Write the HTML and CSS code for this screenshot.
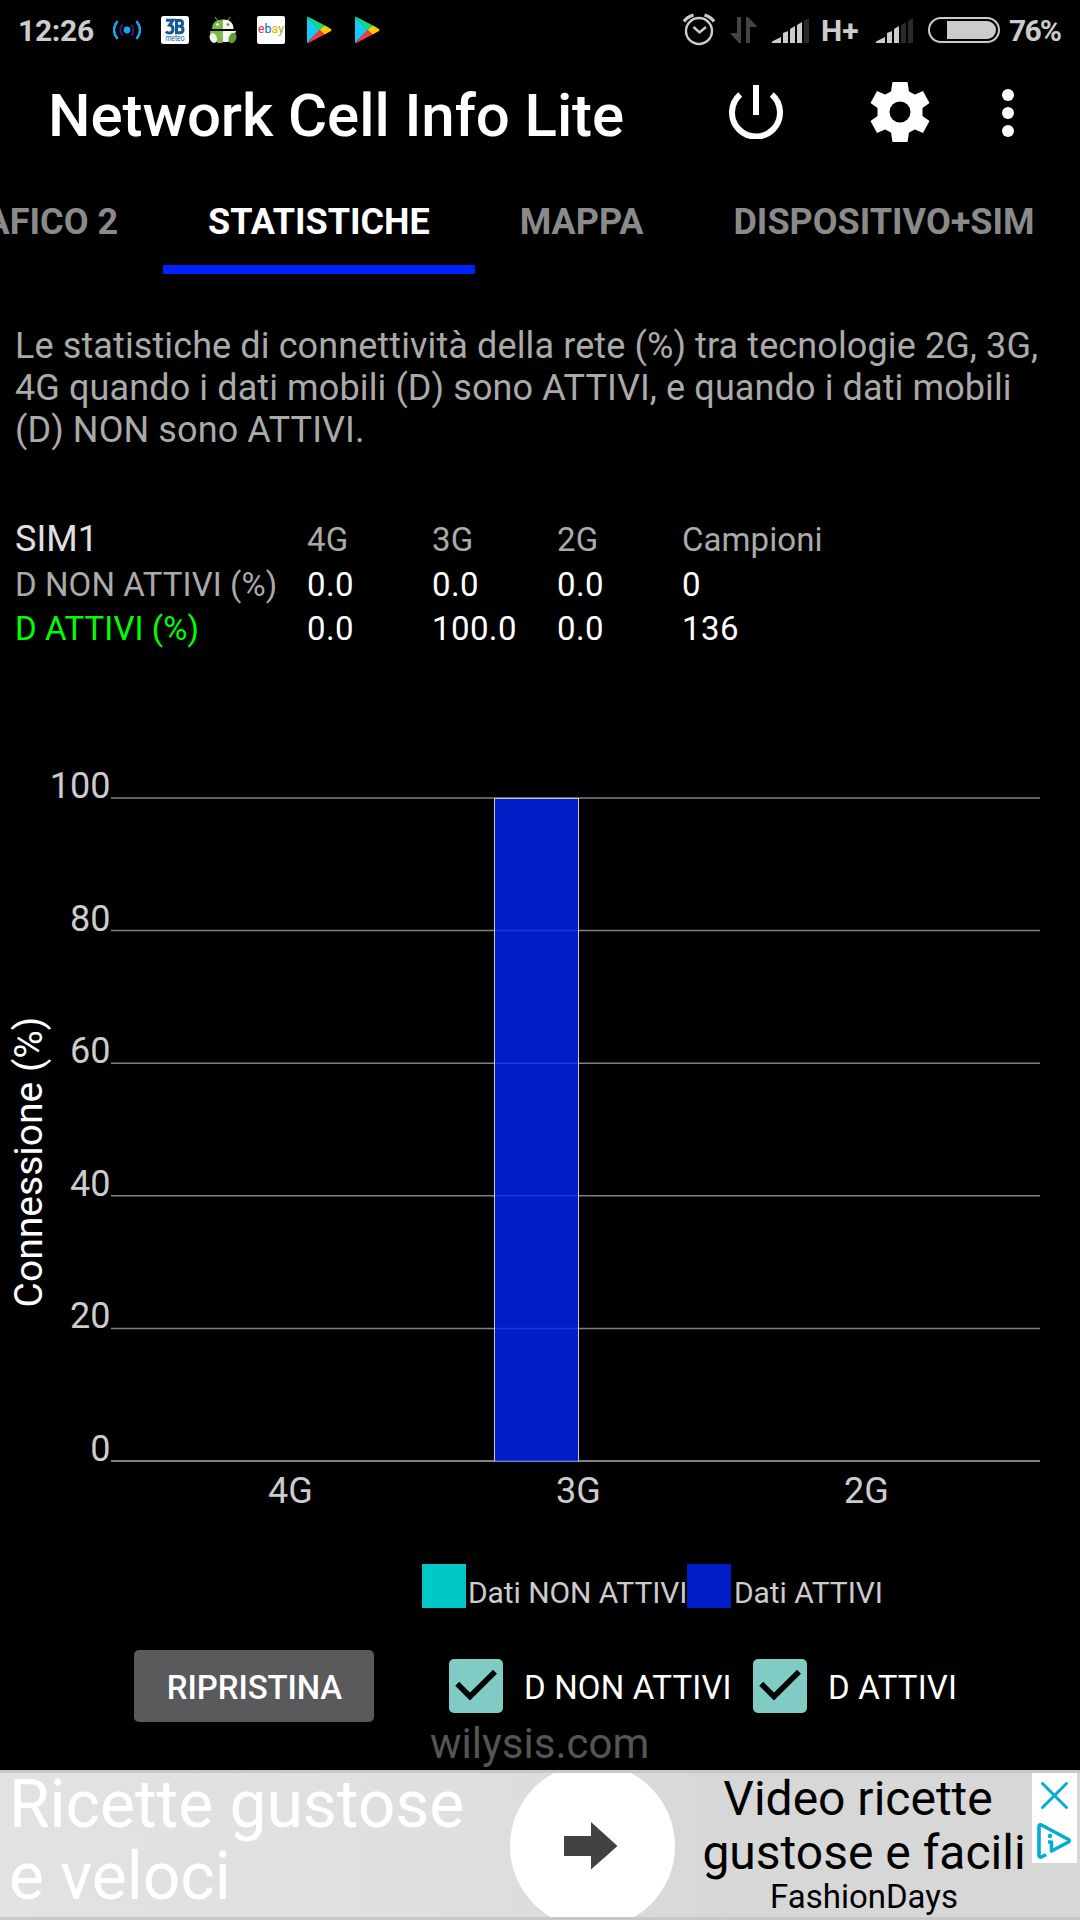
FILE: index.html
```html
<!DOCTYPE html>
<html lang="it">
<head>
<meta charset="utf-8">
<title>Network Cell Info Lite</title>
<link rel="stylesheet" href="styles.css">
</head>
<body>
<div class="screen">
  <div class="statusbar">
    <div class="status-left">
      <span class="clock">12:26</span>
      <svg class="notif" viewBox="0 0 28 28"><circle cx="14" cy="14" r="3.400" fill="#1ba6f5"/><path d="M9.700 8.500Q5.400 14 9.700 19.500M18.300 8.500Q22.600 14 18.300 19.500" fill="none" stroke="#2a1e6e" stroke-width="2.200"/><path d="M4.600 5Q-2.600 14 4.600 23M23.400 5Q30.600 14 23.400 23" fill="none" stroke="#1ba6f5" stroke-width="2.400"/></svg>
      <svg class="notif" viewBox="0 0 28 28"><rect width="28" height="28" rx="2.500" fill="#fff"/><g fill="none" stroke="#155a94" stroke-width="3"><path d="M5 4.300H12L8.500 9Q12 9.500 12 13Q12 17 8.500 17Q6 17 5 15.500"/><path d="M14 4.500H19Q21.500 4.500 21.500 7.200Q21.500 10 19 10.200H16M19 10.200Q22 10.500 22 13.500Q22 16.700 19 16.700H14M15.500 3V18"/></g><text class="meteo" x="14" y="25.300" text-anchor="middle" textLength="19" lengthAdjust="spacingAndGlyphs">meteo</text></svg>
      <svg class="notif" viewBox="0 0 28 28"><path d="M6 1L9 5.500M21 1L18 5.500" stroke="#7cb93f" stroke-width="1"/><path d="M3 13Q3 3.500 13.500 3.500V13Z" fill="#7cb93f"/><path d="M13.500 3.500Q24.500 3.500 24.500 13H13.500Z" fill="#f4f4f4"/><circle cx="8.500" cy="8.500" r="1.300" fill="#fff"/><circle cx="19" cy="8.500" r="1.300" fill="#5d8f2c"/><path d="M1 15H13.500V27H9Q5 24 1 17Z" fill="#7cb93f"/><path d="M13.500 15H27Q25 22 19 26H13.500Z" fill="#f4f4f4"/><ellipse cx="4.300" cy="22" rx="3.500" ry="5" transform="rotate(-20 4.300 22)" fill="#f4f4f4"/><ellipse cx="23.500" cy="22" rx="3.700" ry="5.500" transform="rotate(20 23.500 22)" fill="#639b35"/></svg>
      <svg class="notif" viewBox="0 0 28 28"><rect width="28" height="28" rx="2" fill="#fff"/><text class="ebay" x="1" y="17" textLength="26" lengthAdjust="spacingAndGlyphs"><tspan fill="#e53238">e</tspan><tspan fill="#0064d2">b</tspan><tspan fill="#f5af02">a</tspan><tspan fill="#86b817">y</tspan></text></svg>
      <svg class="notif" viewBox="0 0 28 28"><path d="M2 1L15 14L2 27Z" fill="#14c9f5"/><path d="M2 1Q3 .500 4 1.300L19.500 9.300L14.500 14Z" fill="#0be07a"/><path d="M19.500 9.300L26 13Q27 14 26 15L19.500 18.500L14.500 14Z" fill="#fc0"/><path d="M2 27L14.500 14L19.500 18.500L4 26.700Q3 27.500 2 27Z" fill="#f23a4a"/></svg>
      <svg class="notif" viewBox="0 0 28 28"><path d="M2 1L15 14L2 27Z" fill="#14c9f5"/><path d="M2 1Q3 .500 4 1.300L19.500 9.300L14.500 14Z" fill="#0be07a"/><path d="M19.500 9.300L26 13Q27 14 26 15L19.500 18.500L14.500 14Z" fill="#fc0"/><path d="M2 27L14.500 14L19.500 18.500L4 26.700Q3 27.500 2 27Z" fill="#f23a4a"/></svg>
    </div>
    <svg class="status-right" viewBox="0 0 398 60">
      <g fill="none" stroke="#ccc"><circle cx="17" cy="31" r="13" stroke-width="2.400"/><path d="M11.500 27L17.500 32.500L24 27" stroke-width="2.400"/><path d="M2 21.500Q5 17 11.500 15M32 21.500Q29 17 22.500 15" stroke-width="3.200"/></g>
      <path d="M48 33H55V17H59V43H57ZM64 17H66L75.500 27H68V43H64Z" fill="#444"/>
      <path d="M90 43V41.500L99 37V43ZM101 33L106 31V43H101ZM108 29L113 26V43H108ZM115 25L120 22V43H115Z" fill="#ccc"/>
      <path d="M122 21L127 18V43H122Z" fill="#2a2a2a"/>
      <text class="status-text" x="139" y="41">H+</text>
      <path d="M194 43V41.500L203 37V43ZM205 33L210 31V43H205ZM212 29L217 26V43H212Z" fill="#ccc"/>
      <path d="M219 25L224 22V43H219ZM226 21L231 18V43H226Z" fill="#2a2a2a"/>
      <rect x="247" y="18" width="70" height="24" rx="12" fill="none" stroke="#ccc" stroke-width="2"/>
      <path d="M265 21H305A9 9 0 0 1 305 39H265Z" fill="#ccc"/>
      <text class="status-text" x="327" y="41" textLength="53">76%</text>
    </svg>
  </div>

  <header class="appbar">
    <h1 class="title">Network Cell Info Lite</h1>
    <svg class="power" viewBox="0 0 54 54"><path d="M11.200 9.500A24 24 0 1 0 42.800 9.500" fill="none" stroke="#fff" stroke-width="6" /><path d="M27 0V30" stroke="#fff" stroke-width="6"/></svg>
    <svg class="gear" viewBox="0 0 60 60"><path fill="#fff" fill-rule="evenodd" d="M22.500 0H37.500L39 9.500L45 12.500L53 9L59.500 21L52.500 26V34L59.500 39L53 51L45 47.500L39 50.500L37.500 60H22.500L21 50.500L15 47.500L7 51L.500 39L7.500 34V26L.500 21L7 9L15 12.500L21 9.500ZM30 19.500A10.500 10.500 0 1 0 30 40.500A10.500 10.500 0 1 0 30 19.500Z"/></svg>
    <svg class="more" viewBox="0 0 12 48"><g fill="#fff"><circle cx="6" cy="6" r="6"/><circle cx="6" cy="24" r="6"/><circle cx="6" cy="42" r="6"/></g></svg>
  </header>

  <nav class="tabs">
    <span class="tab">GRAFICO 2</span>
    <span class="tab active">STATISTICHE</span>
    <span class="tab">MAPPA</span>
    <span class="tab">DISPOSITIVO+SIM</span>
  </nav>

  <p class="intro">Le statistiche di connettività della rete (%) tra tecnologie 2G, 3G,<br>4G quando i dati mobili (D) sono ATTIVI, e quando i dati mobili<br>(D) NON sono ATTIVI.</p>

  <div class="stats">
    <span class="sim">SIM1</span><span>4G</span><span>3G</span><span>2G</span><span>Campioni</span>
    <span>D NON ATTIVI (%)</span><b>0.0</b><b>0.0</b><b>0.0</b><b>0</b>
    <span class="on">D ATTIVI (%)</span><b>0.0</b><b>100.0</b><b>0.0</b><b>136</b>
  </div>

  <svg class="chart" viewBox="0 0 1080 760">
    <g stroke="#808080" stroke-width="1.500">
      <path d="M111 38H1040M111 170.600H1040M111 303.200H1040M111 435.800H1040M111 568.400H1040"/>
      <path d="M111 701H1040" stroke-width="2"/>
    </g>
    <rect x="494.500" y="38.500" width="84" height="662.500" fill="#001ec8" stroke="#ccc"/>
    <path d="M495 170.600H578M495 303.200H578M495 435.800H578M495 568.400H578M495 700.500H578" stroke="#1b36dc" stroke-width="1.500"/>
    <g class="axis" text-anchor="end">
      <text x="110.500" y="38">100</text>
      <text x="110.500" y="171">80</text>
      <text x="110.500" y="303">60</text>
      <text x="110.500" y="436">40</text>
      <text x="110.500" y="568">20</text>
      <text x="110.500" y="701">0</text>
    </g>
    <g class="axis" text-anchor="middle">
      <text x="290.500" y="743">4G</text>
      <text x="578.500" y="743">3G</text>
      <text x="866.500" y="743">2G</text>
    </g>
    <text class="ylabel" transform="translate(42 402) rotate(-90)" text-anchor="middle">Connessione (%)</text>
  </svg>

  <div class="legend">
    <i class="swatch off"></i><span class="legend-off">Dati NON ATTIVI</span>
    <i class="swatch"></i><span>Dati ATTIVI</span>
  </div>

  <div class="controls">
    <button class="reset">RIPRISTINA</button>
    <label class="check first"><svg class="box" viewBox="0 0 54 54"><rect width="54" height="54" rx="5" fill="#80cbc4"/><path d="M8.200 24.700L21 37.500L46 12.700" fill="none" stroke="#000" stroke-width="5.500"/></svg><span class="check-text">D NON ATTIVI</span></label>
    <label class="check second"><svg class="box" viewBox="0 0 54 54"><rect width="54" height="54" rx="5" fill="#80cbc4"/><path d="M8.200 24.700L21 37.500L46 12.700" fill="none" stroke="#000" stroke-width="5.500"/></svg><span class="check-text">D ATTIVI</span></label>
  </div>
  <div class="brand">wilysis.com</div>

  <div class="ad">
    <div class="ad-head">Ricette gustose<br>e veloci</div>
    <svg class="ad-go" viewBox="0 0 166 144"><circle cx="82.500" cy="73" r="82.500" fill="#fff"/><path d="M54 63H81V49L107.500 73L81 96.500V83H54Z" fill="#424242"/></svg>
    <div class="ad-copy"><div class="ad-title">Video ricette&nbsp;<br>gustose e facili</div><div class="ad-brand">FashionDays</div></div>
    <svg class="ad-ctl" viewBox="0 0 45 90"><rect width="45" height="90" fill="#fff"/><g fill="none" stroke="#00aecd"><path d="M10.500 10.500L34.500 34.500M34.500 10.500L10.500 34.500" stroke-width="3" stroke-linecap="round"/><path d="M14 81.500L9.500 84Q7 84.500 7 82V54Q7 51 9.500 52L36.500 66.500Q38 67.500 36.500 69L19.500 78V69H16" stroke-width="3.600" stroke-linejoin="round"/></g><circle cx="18" cy="63" r="2.200" fill="#00aecd"/></svg>
  </div>
</div>
</body>
</html>
```
FILE: styles.css
```css
body { margin: 0; background: #000; font-family: Roboto, sans-serif; }
.screen { width: 1080px; height: 1920px; display: flex; flex-direction: column; overflow: hidden; background: #000; color: #fff; }
svg { display: block; flex: none; }

.statusbar { height: 60px; display: flex; justify-content: space-between; flex: none; }
.status-left { display: flex; align-items: center; gap: 20px; padding-left: 18px; }
.clock { width: 75px; font-size: 30px; font-weight: 700; letter-spacing: -0.3px; color: #ccc; white-space: nowrap; }
.notif { width: 28px; height: 28px; }
.status-right { width: 398px; height: 60px; }
.status-text { font-size: 30px; font-weight: 700; fill: #ccc; }
.meteo { font-size: 8.5px; fill: #155a94; }
.ebay { font-size: 13px; }

.appbar { height: 110px; display: flex; align-items: flex-start; flex: none; padding-left: 48px; }
.title { width: 681px; margin: 21px 0 0; font-size: 60px; line-height: 70px; font-weight: 500; letter-spacing: -0.08px; white-space: nowrap; }
.power { width: 54px; height: 54px; margin-top: 25px; }
.gear { width: 60px; height: 60px; margin: 22px 0 0 87px; }
.more { width: 12px; height: 48px; margin: 29px 0 0 72px; }

.tabs { height: 104px; display: flex; flex: none; margin-left: -107px; }
.tab { box-sizing: border-box; height: 104px; padding: 31px 45px 0; font-size: 36px; line-height: 42px; font-weight: 700; letter-spacing: 0; color: #8a8a8a; white-space: nowrap; flex: none; }
.active { color: #fff; border-bottom: 9px solid #0022ff; }

.intro { margin: 51px 0 0 15px; font-size: 36px; line-height: 42px; letter-spacing: 0.11px; color: #aaa; white-space: nowrap; }

.stats { margin: 67px 0 0 15px; display: grid; grid-template-columns: 292px 125px 125px 125px 1fr; grid-template-rows: 45px 44px 43px; align-items: baseline; font-size: 33px; line-height: 43px; letter-spacing: 0.08px; color: #aaa; white-space: nowrap; }
.stats b { font-weight: 400; letter-spacing: 0.4px; color: #fff; }
.sim { font-size: 36px; color: #e0e0e0; }
.stats .on { color: #0f0; }

.chart { width: 1080px; height: 760px; margin-top: 110px; }
.axis { font-size: 36px; fill: #ccc; }
.ylabel { font-size: 39px; fill: #fff; }

.legend { display: flex; margin: 44px 0 0 422px; height: 44px; font-size: 30px; line-height: 58px; letter-spacing: -0.08px; color: #ccc; white-space: nowrap; }
.swatch { width: 44px; height: 44px; margin-right: 3px; background: #001ec8; flex: none; }
.off { margin-right: 2px; background: #00c8c8; }
.legend-off { width: 219px; }

.controls { display: flex; align-items: center; height: 72px; margin-top: 42px; padding-left: 134px; flex: none; }
.reset { width: 240px; height: 72px; padding: 2px 0 0 1px; border: 0; border-radius: 5px; background: #5a595b; color: #fff; font: 500 33px Roboto, sans-serif; letter-spacing: -0.1px; }
.check { display: flex; align-items: center; gap: 21px; font-size: 33px; letter-spacing: 0.15px; white-space: nowrap; }
.check-text { padding-top: 2px; }
.box { width: 54px; height: 54px; }
.first { width: 304px; margin-left: 75px; }

.brand { height: 48px; margin-left: 430px; font-size: 42px; line-height: 44px; color: #555; flex: none; }

.ad { box-sizing: border-box; height: 150px; display: flex; flex: none; border: solid #c8c8c8; border-width: 3px 0; background: linear-gradient(to right, #e2e2e2, #dfdfdf 42%, #d7d7d7 68%); color: #000; }
.ad-head { width: 501px; padding-left: 9px; font-size: 66px; line-height: 72px; letter-spacing: -0.05px; color: #fff; white-space: nowrap; margin-top: -4px; height: 144px; }
.ad-go { width: 166px; height: 144px; }
.ad-copy { box-sizing: border-box; width: 356px; padding-left: 20px; text-align: center; font-size: 48px; line-height: 54px; white-space: nowrap; margin-top: -1px; height: 144px; }
.ad-brand { font-size: 33px; line-height: 34px; }
.ad-ctl { width: 45px; height: 90px; }
```
